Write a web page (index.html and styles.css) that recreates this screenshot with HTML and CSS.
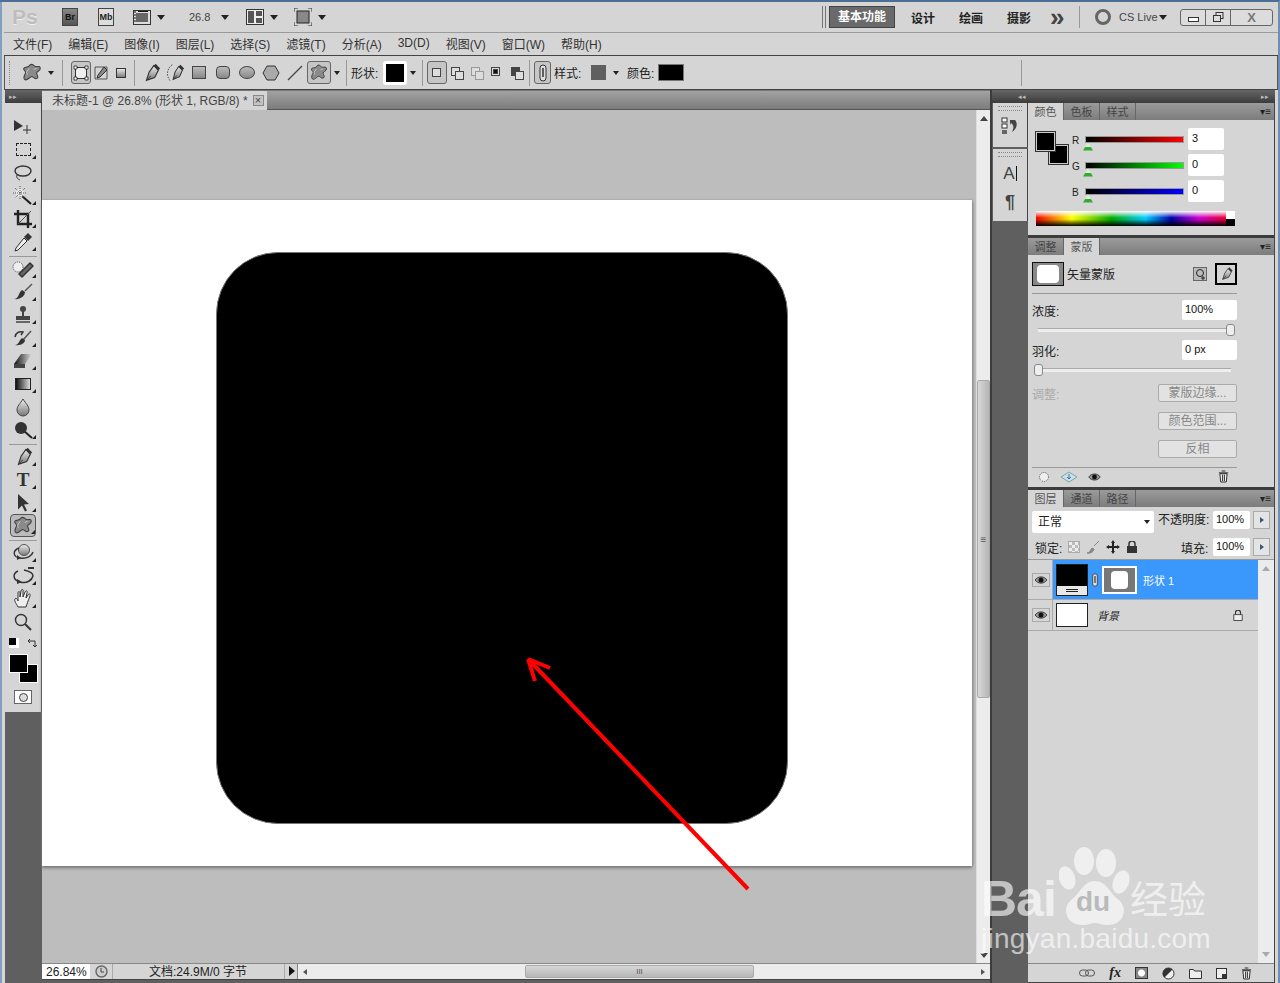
FILE: index.html
```html
<!DOCTYPE html>
<html lang="zh-CN">

<head>
    <meta charset="UTF-8">
    <title>Photoshop CS5</title>
    <link rel="stylesheet" href="styles.css">
</head>

<body>
    <!-- shared icons -->
    <svg class="defs" width="0" height="0">
        <defs>
            <linearGradient id="gr" x1="0" x2="1"><stop offset="0" stop-color="#111"/><stop offset="1" stop-color="#ddd"/></linearGradient>
            <linearGradient id="gv" x1="0" x2="0" y1="0" y2="1"><stop offset="0" stop-color="#eee"/><stop offset="1" stop-color="#777"/></linearGradient>
            <symbol id="blob" viewBox="0 0 24 24"><path d="M10 3c3-2 4 2 6 2s5-1 5 2-4 3-4 5 3 5 0 6-4-3-6-2-5 5-7 3 0-5 1-7-3-3-2-5 5 0 7-4z" fill="#8a8a8a" stroke="#444" stroke-width="1.2"/><path d="M9 7l-3 4 1 3M14 8l3-1" stroke="#ccc" fill="none"/></symbol>
            <symbol id="pen" viewBox="0 0 24 24"><path d="M15 4l5 5-4 8-9 3 3-9z" fill="url(#gv)" stroke="#333" stroke-width="1.2"/><path d="M7 20l5-5" stroke="#333"/><path d="M15 4l2-2 5 5-2 2z" fill="#333"/></symbol>
            <symbol id="pen2" viewBox="0 0 24 24"><path d="M16 5l4 4-3 7-7 3 2-8z" fill="url(#gv)" stroke="#333" stroke-width="1.1"/><path d="M10 19l4-4" stroke="#333"/><path d="M16 5l2-2 4 4-2 2z" fill="#333"/><path d="M9 3C3 7 2 15 7 21" fill="none" stroke="#333" stroke-dasharray="1.500 1.500"/></symbol>
            <symbol id="eye" viewBox="0 0 16 12"><path d="M1 6c3-5 11-5 14 0-3 5-11 5-14 0z" fill="#999" stroke="#222"/><circle cx="8" cy="6" r="3" fill="#111"/></symbol>
            <symbol id="trash" viewBox="0 0 12 14"><path d="M2 4h8l-1 9H3z" fill="#eee" stroke="#222"/><path d="M1 3h10M4 1h4M5 5v7M7 5v7" stroke="#222"/></symbol>
            <symbol id="clip" viewBox="0 0 10 18"><rect x="2" y="1" width="6" height="16" rx="3" fill="#ddd" stroke="#333"/><path d="M5 4v9" stroke="#333" stroke-width="1.5"/></symbol>
        </defs>
    </svg>

    <div class="app">
        <div class="appbar">
            <span class="ps-logo">Ps</span>
            <span class="bridge dark">Br</span>
            <span class="bridge">Mb</span>
            <svg class="bar-icon film" width="18" height="18" viewBox="0 0 18 18"><rect x=".5" y="2.5" width="17" height="14" fill="#ddd" stroke="#333"/><rect x="3" y="5" width="12" height="9" fill="#666"/><path d="M1 4h2M1 7h2M1 10h2M1 13h2M5 3.5h10" stroke="#111"/></svg>
            <i class="caret"></i>
            <span class="zoom-val">26.8</span>
            <i class="caret"></i>
            <svg class="bar-icon arrange" width="18" height="16" viewBox="0 0 18 16"><rect x=".5" y=".5" width="17" height="15" fill="#eee" stroke="#333"/><rect x="2" y="2" width="6" height="12" fill="#555"/><rect x="10" y="2" width="6" height="5" fill="#555"/><rect x="10" y="9" width="6" height="5" fill="#555"/></svg>
            <i class="caret"></i>
            <svg class="bar-icon screen" width="18" height="18" viewBox="0 0 18 18"><rect x="3" y="3" width="12" height="12" fill="#888" stroke="#222"/><path d="M0 4V0h4M14 0h4v4M18 14v4h-4M4 18H0v-4" fill="none" stroke="#333"/></svg>
            <i class="caret"></i>
            <span class="spacer"></span>
            <span class="grip-lines"></span>
            <span class="ws-btn">基本功能</span>
            <span class="ws-item">设计</span>
            <span class="ws-item">绘画</span>
            <span class="ws-item">摄影</span>
            <span class="ws-more">»</span>
            <span class="bar-sep"></span>
            <span class="cs-ring"></span>
            <span class="cs-live">CS Live</span>
            <i class="caret small"></i>
            <div class="win-btns">
                <span class="win-btn"><i class="min"></i></span>
                <span class="win-btn"><svg width="12" height="12" viewBox="0 0 12 12"><rect x="4" y="1.5" width="7" height="6" fill="#ddd" stroke="#333"/><rect x="1.5" y="4.5" width="7" height="6" fill="#ddd" stroke="#333"/></svg></span>
                <span class="win-btn close">X</span>
            </div>
        </div>

        <div class="menubar">
            <span>文件(F)</span><span>编辑(E)</span><span>图像(I)</span><span>图层(L)</span><span>选择(S)</span><span>滤镜(T)</span><span>分析(A)</span><span>3D(D)</span><span>视图(V)</span><span>窗口(W)</span><span>帮助(H)</span>
        </div>

        <div class="options">
            <span class="opt-grip"></span>
            <svg class="opt" width="22" height="22"><use href="#blob"/></svg>
            <i class="caret tiny"></i>
            <span class="opt-sep first"></span>
            <span class="opt narrow boxed"><svg width="16" height="16" viewBox="0 0 16 16"><rect x="2.5" y="2.5" width="11" height="11" fill="#eee" stroke="#333"/><path d="M1 1h3v3H1zM12 1h3v3h-3zM1 12h3v3H1zM12 12h3v3h-3z" fill="#fff" stroke="#222" stroke-width=".8"/></svg></span>
            <span class="opt narrow"><svg width="18" height="18" viewBox="0 0 18 18"><path d="M3 3h12v12H3z" fill="none" stroke="#555"/><path d="M12 3l3 3-7 7-3 1 1-3z" fill="#888" stroke="#333"/></svg></span>
            <span class="opt narrow"><svg width="14" height="14" viewBox="0 0 14 14"><rect x="2.500" y="2.500" width="9" height="9" fill="url(#gv)" stroke="#333"/></svg></span>
            <span class="opt-sep pens"></span>
            <svg class="opt" width="24" height="22"><use href="#pen"/></svg>
            <svg class="opt" width="24" height="22"><use href="#pen2"/></svg>
            <span class="opt"><i class="shape rect"></i></span>
            <span class="opt"><i class="shape round"></i></span>
            <span class="opt"><i class="shape oval"></i></span>
            <span class="opt"><svg width="18" height="16" viewBox="0 0 18 16"><path d="M5 1h8l4 7-4 7H5L1 8z" fill="#aaa" stroke="#333"/></svg></span>
            <span class="opt"><svg width="18" height="18" viewBox="0 0 18 18"><path d="M2 16L16 2" stroke="#444" stroke-width="1.3"/></svg></span>
            <span class="opt boxed wide"><svg width="20" height="20"><use href="#blob"/></svg></span>
            <i class="caret tiny near"></i>
            <span class="opt-sep label"></span>
            <span class="opt-label">形状:</span>
            <span class="shape-swatch"></span>
            <i class="caret tiny near"></i>
            <span class="opt-sep modes"></span>
            <span class="opt boxed mode"><i class="mode-a"></i></span>
            <span class="opt mode"><i class="mode-a"></i><i class="mode-b"></i></span>
            <span class="opt mode"><i class="mode-a pale"></i><i class="mode-b pale"></i></span>
            <span class="opt mode"><i class="mode-a"></i><i class="mode-b black"></i></span>
            <span class="opt mode"><i class="mode-a dark"></i><i class="mode-b"></i></span>
            <span class="opt-sep tight"></span>
            <span class="opt boxed link"><svg width="10" height="18"><use href="#clip"/></svg></span>
            <span class="opt-label">样式:</span>
            <span class="style-swatch"></span>
            <i class="caret tiny far"></i>
            <span class="opt-label color-label">颜色:</span>
            <span class="color-swatch"></span>
            <span class="spacer"></span>
            <span class="opt-sep end"></span>
        </div>

        <div class="workspace">
            <div class="tools">
                <div class="dock-head"><span>▸▸</span></div>
                <div class="tools-body">
                    <span class="tool"><svg width="22" height="20" viewBox="0 0 22 20"><path d="M2 3l9 6-9 5z" fill="#333"/><path d="M15 8v9M11 13h8" stroke="#333"/></svg></span>
                    <span class="tool more"><i class="marquee"></i></span>
                    <span class="tool more"><svg width="20" height="20" viewBox="0 0 20 20"><ellipse cx="10" cy="8" rx="8" ry="5" fill="none" stroke="#333" stroke-width="1.4"/><path d="M4 12c-1 3 1 4 3 5" fill="none" stroke="#333"/></svg></span>
                    <span class="tool more"><svg width="20" height="20" viewBox="0 0 20 20"><path d="M8 9l10 9" stroke="#222" stroke-width="2.2"/><circle cx="7" cy="7" r="4" fill="#eee"/><path d="M7 0v14M0 7h14M2 2l10 10M12 2L2 12" stroke="#555" stroke-dasharray="1 1"/></svg></span>
                    <span class="tool more"><svg width="20" height="20" viewBox="0 0 20 20"><path d="M5 1v14h14M1 5h14v14" fill="none" stroke="#222" stroke-width="2.4"/><path d="M5 15L18 2" stroke="#555"/></svg></span>
                    <span class="tool more"><svg width="20" height="20" viewBox="0 0 20 20"><path d="M11 6l3 3-9 9-3 1 1-3z" fill="#eee" stroke="#333"/><path d="M11 5l4-4 4 4-4 4z" fill="#333"/></svg></span>
                    <span class="tool-sep"></span>
                    <span class="tool more"><svg width="22" height="20" viewBox="0 0 22 20"><circle cx="6" cy="8" r="5" fill="#eee" stroke="#444" stroke-dasharray="1 1"/><path d="M7 15L18 4l3 3-11 11z" fill="#666" stroke="#333" stroke-width="1.5" stroke-linejoin="round"/></svg></span>
                    <span class="tool more"><svg width="20" height="20" viewBox="0 0 20 20"><path d="M12 9l7-7" stroke="#555" stroke-width="1.5"/><path d="M1 17c5 0 4-6 8-9l3 2c0 4-5 8-11 7z" fill="#333"/></svg></span>
                    <span class="tool more"><svg width="20" height="20" viewBox="0 0 20 20"><circle cx="10" cy="4" r="3" fill="#444"/><path d="M9 6h2v5H9z" fill="#444"/><path d="M3 11h14v4H3z" fill="#444"/><path d="M3 17h14" stroke="#666" stroke-width="2"/></svg></span>
                    <span class="tool more"><svg width="20" height="20" viewBox="0 0 20 20"><path d="M10 12l8-9" stroke="#555" stroke-width="1.5"/><path d="M2 17c4 0 4-5 7-7l3 2c0 3-4 6-10 5z" fill="#333"/><path d="M2 9c1-5 5-6 8-5l-2 3" fill="none" stroke="#333" stroke-width="1.5"/></svg></span>
                    <span class="tool more"><svg width="20" height="20" viewBox="0 0 20 20"><path d="M8 3h11l-7 10H1z" fill="url(#gr)"/><path d="M1 13h11v4H1z" fill="#444"/></svg></span>
                    <span class="tool more"><i class="grad-box"></i></span>
                    <span class="tool"><svg width="18" height="20" viewBox="0 0 18 20"><path d="M9 2c3 5 6 7 6 11a6 6 0 01-12 0c0-4 3-6 6-11z" fill="url(#gv)" stroke="#444"/></svg></span>
                    <span class="tool more"><svg width="20" height="20" viewBox="0 0 20 20"><path d="M11 11l8 7" stroke="#222" stroke-width="2"/><circle cx="8" cy="8" r="6" fill="#333"/></svg></span>
                    <span class="tool-sep"></span>
                    <span class="tool more"><svg width="22" height="22"><use href="#pen"/></svg></span>
                    <span class="tool more type">T</span>
                    <span class="tool more"><svg width="18" height="20" viewBox="0 0 18 20"><path d="M4 1l11 10-5 .5 3 6-2 1-3-6-4 4z" fill="#333"/></svg></span>
                    <span class="tool more active"><svg width="22" height="22"><use href="#blob"/></svg></span>
                    <span class="tool-sep"></span>
                    <span class="tool more"><svg width="22" height="20" viewBox="0 0 22 20"><circle cx="12" cy="7" r="5.5" fill="url(#gv)" stroke="#555"/><path d="M7 5C0 8 1 14 8 15s12-2 13-6" fill="none" stroke="#333" stroke-width="1.4"/><path d="M5 12l4 3-4 2z" fill="#333"/></svg></span>
                    <span class="tool more"><svg width="22" height="20" viewBox="0 0 22 20"><path d="M6 5C0 8 1 14 8 16s12-2 13-6c0-3-4-5-9-6" fill="none" stroke="#333" stroke-width="1.5"/><path d="M5 13l5 3-5 2z" fill="#333"/><path d="M16 2h6" stroke="#333" stroke-width="2"/></svg></span>
                    <span class="tool more"><svg width="20" height="20" viewBox="0 0 20 20"><path d="M5 18C3 14 1 12 2 10s3 1 3 2l0-8c0-2 2-2 2 0V8l1-6c0-2 3-2 2 0V8l2-5c1-2 3-1 2 1l-1 5 2-3c1-2 3-1 2 1-2 5-3 8-4 11z" fill="#eee" stroke="#333"/></svg></span>
                    <span class="tool"><svg width="20" height="20" viewBox="0 0 20 20"><circle cx="8" cy="8" r="5.5" fill="none" stroke="#333" stroke-width="1.4"/><path d="M12 12l6 6" stroke="#333" stroke-width="2"/></svg></span>
                    <div class="mini-swatches">
                        <span class="mini-def"><i></i></span>
                        <svg width="11" height="11" viewBox="0 0 11 11"><path d="M2 3h7v6M4 1L2 3l2 2M7 7l2 2 2-2" fill="none" stroke="#333"/></svg>
                    </div>
                    <div class="fg-bg">
                        <span class="fg"></span>
                        <span class="bg"></span>
                    </div>
                    <span class="quick-mask"><i></i></span>
                </div>
            </div>

            <div class="doc-area">
                <div class="doc-tabs">
                    <div class="doc-tab">未标题-1 @ 26.8% (形状 1, RGB/8) *<span class="tab-close">×</span></div>
                </div>
                <div class="doc-main">
                    <div class="canvas">
                        <div class="doc-page">
                            <div class="rounded-shape"></div>
                        </div>
                    </div>
                    <div class="vscroll">
                        <i class="arr up"></i>
                        <span class="vtrack-top"></span>
                        <span class="vthumb">≡</span>
                        <span class="spacer"></span>
                        <i class="arr down"></i>
                    </div>
                </div>
                <div class="status">
                    <span class="st-zoom">26.84%</span>
                    <span class="st-icon"><svg width="13" height="13" viewBox="0 0 13 13"><circle cx="6.5" cy="6.5" r="5.5" fill="#ccc" stroke="#666" stroke-width="1.4"/><path d="M6 3v4h3" fill="none" stroke="#444"/></svg></span>
                    <span class="st-text">文档:24.9M/0 字节</span>
                    <span class="st-arrow"></span>
                    <div class="hscroll">
                        <i class="harr left"></i>
                        <span class="hthumb">III</span>
                        <span class="spacer"></span>
                        <i class="harr right"></i>
                    </div>
                </div>
            </div>

            <div class="dock">
                <div class="dock-head mid"><span>◂◂</span></div>
                <div class="dock-group one">
                    <i class="dots"></i>
                    <svg width="18" height="18" viewBox="0 0 18 18"><rect x="1" y="1" width="5" height="4" fill="#fff" stroke="#333"/><rect x="1" y="7" width="5" height="4" fill="#fff" stroke="#333"/><rect x="1" y="13" width="5" height="4" fill="#666"/><path d="M9 3h5c3 3 2 9-3 12 2-4 2-7-1-9l-1 2z" fill="#444"/></svg>
                </div>
                <div class="dock-group two">
                    <i class="dots"></i>
                    <span class="dock-a">A<b></b></span>
                    <span class="dock-p">¶</span>
                </div>
            </div>

            <div class="panels">
                <div class="dock-head right"><span>▸▸</span></div>

                <section class="panel color-panel">
                    <div class="tabs"><span class="tab on">颜色</span><span class="tab">色板</span><span class="tab">样式</span><span class="menu-ic">▾≡</span></div>
                    <div class="color-body">
                        <div class="color-swatches"><span class="c-fg"></span><span class="c-bg"></span></div>
                        <div class="color-rows">
                            <div class="c-row"><span class="c-label">R</span><span class="c-track red"><i class="tri"></i></span><span class="field c-field">3</span></div>
                            <div class="c-row"><span class="c-label">G</span><span class="c-track green"><i class="tri"></i></span><span class="field c-field">0</span></div>
                            <div class="c-row"><span class="c-label">B</span><span class="c-track blue"><i class="tri"></i></span><span class="field c-field">0</span></div>
                        </div>
                    </div>
                    <div class="spectrum"><span class="spec-end"></span></div>
                </section>

                <section class="panel mask-panel">
                    <div class="tabs"><span class="tab">调整</span><span class="tab on">蒙版</span><span class="menu-ic">▾≡</span></div>
                    <div class="mask-body">
                        <div class="mask-head">
                            <span class="mask-thumb"><i></i></span>
                            <span class="mask-name">矢量蒙版</span>
                            <span class="spacer"></span>
                            <span class="mask-add"><svg width="12" height="12" viewBox="0 0 12 12"><circle cx="6" cy="5" r="3.5" fill="none" stroke="#222"/><path d="M9 8v4M7 10h4" stroke="#222"/></svg></span>
                            <span class="mask-vec"><svg width="16" height="16"><use href="#pen"/></svg></span>
                        </div>
                        <div class="mask-row first"><span>浓度:</span><span class="field m-field">100%</span></div>
                        <div class="m-slider"><i class="knob end"></i></div>
                        <div class="mask-row"><span>羽化:</span><span class="field m-field">0 px</span></div>
                        <div class="m-slider"><i class="knob"></i></div>
                        <div class="mask-row btn-row"><span class="off">调整:</span><span class="m-btn">蒙版边缘...</span></div>
                        <div class="mask-row btn-row gap"><span class="m-btn">颜色范围...</span></div>
                        <div class="mask-row btn-row gap"><span class="m-btn">反相</span></div>
                        <div class="mask-foot">
                            <svg width="12" height="12" viewBox="0 0 12 12"><circle cx="6" cy="6" r="4.5" fill="#eee" stroke="#555" stroke-dasharray="1 1"/></svg>
                            <svg width="18" height="12" viewBox="0 0 18 12"><path d="M9 1l8 5-8 5-8-5z" fill="#cde" stroke="#7a9"/><path d="M9 3v5M7 6l2 2 2-2" fill="none" stroke="#379"/></svg>
                            <svg width="13" height="10"><use href="#eye"/></svg>
                            <span class="spacer"></span>
                            <svg width="11" height="13"><use href="#trash"/></svg>
                        </div>
                    </div>
                </section>

                <section class="panel layer-panel">
                    <div class="tabs"><span class="tab on">图层</span><span class="tab">通道</span><span class="tab">路径</span><span class="menu-ic">▾≡</span></div>
                    <div class="blend-row">
                        <span class="blend-select">正常<i class="caret tiny"></i></span>
                        <span class="blend-label">不透明度:</span>
                        <span class="field pct">100%</span><span class="step"></span>
                    </div>
                    <div class="lock-row">
                        <span>锁定:</span>
                        <i class="lock-ic checker"></i>
                        <svg width="14" height="14" viewBox="0 0 14 14"><path d="M8 6l5-5M1 13c3 0 3-3 5-5l2 1c0 2-3 5-7 4z" fill="#888" stroke="#888"/></svg>
                        <svg width="14" height="14" viewBox="0 0 14 14"><path d="M7 0l2 3H8v3h3V5l3 2-3 2V8H8v3h1l-2 3-2-3h1V8H3v1L0 7l3-2v1h3V3H5z" fill="#222"/></svg>
                        <svg width="12" height="12" viewBox="0 0 12 12"><rect x="1" y="5" width="10" height="7" fill="#333"/><path d="M3 5V3a3 3 0 016 0v2" fill="none" stroke="#333" stroke-width="1.5"/></svg>
                        <span class="spacer"></span>
                        <span class="fill-label">填充:</span>
                        <span class="field pct">100%</span><span class="step"></span>
                    </div>
                    <div class="layer-list">
                        <div class="layers">
                            <div class="layer selected">
                                <span class="eye"><svg width="14" height="10"><use href="#eye"/></svg></span>
                                <span class="thumb shape-thumb"><i></i></span>
                                <svg class="chain" width="8" height="14"><use href="#clip"/></svg>
                                <span class="thumb mask-mini"><i></i></span>
                                <span class="layer-name">形状 1</span>
                            </div>
                            <div class="layer bg-layer">
                                <span class="eye"><svg width="14" height="10"><use href="#eye"/></svg></span>
                                <span class="thumb white"></span>
                                <span class="layer-name it">背景</span>
                                <span class="spacer"></span>
                                <svg class="bg-lock" width="10" height="11" viewBox="0 0 12 13"><rect x="1" y="5.5" width="10" height="7" fill="#eee" stroke="#333"/><path d="M3 5V3a3 3 0 016 0v2" fill="none" stroke="#333" stroke-width="1.4"/></svg>
                            </div>
                        </div>
                        <div class="layer-scroll"><i class="arr up pale"></i><span class="spacer"></span><i class="arr down pale"></i></div>
                    </div>
                    <div class="layer-foot">
                        <svg width="16" height="8" viewBox="0 0 16 8"><rect x=".5" y="1" width="9" height="6" rx="3" fill="none" stroke="#555"/><rect x="6.5" y="1" width="9" height="6" rx="3" fill="none" stroke="#555"/></svg>
                        <span class="fx">fx</span>
                        <i class="foot-mask"></i>
                        <svg width="13" height="13" viewBox="0 0 13 13"><circle cx="6.5" cy="6.5" r="5.5" fill="#eee" stroke="#333"/><path d="M6.5 1a5.500 5.500 0 00-4 9.500l8-8A5.500 5.500 0 006.500 1z" fill="#333"/></svg>
                        <svg width="13" height="11" viewBox="0 0 13 11"><path d="M.5 10.500V1.500h4l1 1.500h7v7.500z" fill="#eee" stroke="#333"/></svg>
                        <svg width="11" height="11" viewBox="0 0 11 11"><rect x=".5" y=".5" width="10" height="10" fill="#eee" stroke="#333"/><path d="M6 6h5v5H6z" fill="#333"/></svg>
                        <svg width="11" height="13"><use href="#trash"/></svg>
                    </div>
                </section>
            </div>
        </div>
    </div>

    <!-- annotation drawn over the screenshot -->
    <svg class="arrow" width="1280" height="983" viewBox="0 0 1280 983">
        <path d="M748 889L529 660M528 659l22 9M528 659l7 22" fill="none" stroke="#f00" stroke-width="4"/>
    </svg>

    <!-- watermark -->
    <div class="watermark">
        <span class="wm-bai">Bai</span>
        <svg class="wm-paw" width="72" height="86" viewBox="0 0 72 86">
            <ellipse cx="25" cy="15" rx="10" ry="14" fill="#fff"/>
            <ellipse cx="47" cy="17" rx="10" ry="14" fill="#fff"/>
            <ellipse cx="8" cy="32" rx="8" ry="12" fill="#fff" transform="rotate(-20 8 32)"/>
            <ellipse cx="62" cy="36" rx="8" ry="12" fill="#fff" transform="rotate(20 62 36)"/>
            <path d="M36 35c12 0 14 12 24 19 10 9 4 26-12 25-6 0-8-2-12-2s-6 2-12 2C8 80 2 63 12 54c10-7 12-19 24-19z" fill="#fff"/>
        </svg>
        <span class="wm-du">du</span>
        <span class="wm-jy">经验</span>
        <span class="wm-url">jingyan.baidu.com</span>
    </div>
</body>

</html>
```

FILE: styles.css
```css
* {
    margin: 0;
    padding: 0;
    box-sizing: border-box;
}

body {
    width: 1280px;
    height: 983px;
    overflow: hidden;
    position: relative;
    background: #d5d5d5;
    font-family: "Liberation Sans", "Noto Sans CJK SC", sans-serif;
    font-size: 12px;
    color: #222;
}

i {
    display: block;
    font-style: normal;
}

.defs {
    position: absolute;
}

.spacer {
    flex: 1;
}

.app {
    width: 1280px;
    height: 983px;
    border-top: 2px solid #4c6d94;
    border-right: 2px solid #6f8fb0;
    display: flex;
    flex-direction: column;
    box-shadow: inset 2px 0 0 #7fa0c0;
}

/* top application bar */
.appbar {
    height: 31px;
    flex: none;
    border-bottom: 1px solid #9a9a9a;
    margin-left: 4px;
    display: flex;
    align-items: center;
    padding-right: 5px;
}

.ps-logo {
    margin-left: 8px;
    width: 24px;
    font-size: 21px;
    font-weight: bold;
    color: #bdbdbd;
    text-shadow: 0 1px 0 #eee;
}

.bridge {
    width: 16px;
    height: 18px;
    margin-left: 26px;
    border: 1px solid #444;
    background: #ddd;
    font-size: 9px;
    font-weight: bold;
    line-height: 16px;
    text-align: center;
}

.bridge + .bridge {
    margin-left: 20px;
}

.bridge.dark {
    background: linear-gradient(#888, #555);
    color: #111;
}

.bar-icon.film {
    margin-left: 19px;
}

.bar-icon.arrange {
    margin-left: 17px;
}

.bar-icon.screen {
    margin-left: 16px;
}

.caret {
    width: 0;
    height: 0;
    margin-left: 6px;
    border: 4px solid transparent;
    border-top: 5px solid #222;
    border-bottom: 0;
}

.caret.small {
    margin-left: 2px;
}

.caret.tiny {
    margin-left: 4px;
    border-width: 3px;
    border-top-width: 4px;
    border-bottom-width: 0;
}

.caret.tiny.near {
    margin-left: 3px;
}

.caret.tiny.far {
    margin-left: 7px;
}

.zoom-val {
    margin-left: 24px;
    width: 22px;
    font-size: 11px;
    color: #444;
}

.zoom-val + .caret {
    margin-left: 10px;
}

.grip-lines {
    width: 4px;
    height: 22px;
    border-left: 1px solid #777;
    border-right: 1px solid #777;
}

.ws-btn {
    width: 66px;
    height: 22px;
    margin-left: 3px;
    border: 1px solid #444;
    background: #6a6a6a;
    color: #fff;
    font-weight: bold;
    line-height: 20px;
    text-align: center;
}

.ws-item {
    width: 24px;
    margin-left: 24px;
    font-weight: bold;
    color: #222;
    white-space: nowrap;
}

.ws-btn + .ws-item {
    margin-left: 16px;
}

.ws-more {
    width: 16px;
    margin-left: 19px;
    font-size: 26px;
    font-weight: bold;
    line-height: 22px;
    color: #444;
}

.bar-sep {
    width: 1px;
    height: 22px;
    margin-left: 13px;
    background: #999;
}

.cs-ring {
    width: 16px;
    height: 16px;
    margin-left: 15px;
    border: 3px solid #666;
    border-radius: 50%;
}

.cs-live {
    margin-left: 8px;
    width: 38px;
    font-size: 11px;
    color: #444;
    white-space: nowrap;
}

.win-btns {
    display: flex;
    width: 93px;
    height: 17px;
    margin-left: 13px;
    border: 1px solid #666;
    border-radius: 3px;
    background: #dcdcdc;
}

.win-btn {
    width: 25px;
    border-right: 1px solid #666;
    display: flex;
    align-items: center;
    justify-content: center;
}

.win-btn .min {
    width: 11px;
    height: 5px;
    margin-top: 5px;
    border: 1px solid #333;
    background: #fff;
}

.win-btn.close {
    flex: 1;
    border: 0;
    font-weight: bold;
    font-size: 13px;
    color: #777;
}

/* menu */
.menubar {
    height: 23px;
    flex: none;
    margin-left: 4px;
    padding: 0 0 2px 9px;
    border-bottom: 1px solid #444;
    display: flex;
    align-items: center;
    gap: 16px;
    color: #333;
    white-space: nowrap;
}

/* options bar */
.options {
    height: 34px;
    flex: none;
    margin-left: 4px;
    border-left: 1px solid #555;
    border-right: 1px solid #555;
    border-bottom: 1px solid #444;
    display: flex;
    align-items: center;
    white-space: nowrap;
}

.opt-grip {
    width: 3px;
    height: 24px;
    margin-left: 4px;
    border-left: 1px dotted #888;
}

.opt {
    width: 24px;
    height: 24px;
    flex: none;
    display: flex;
    align-items: center;
    justify-content: center;
    position: relative;
}

.opt.narrow {
    width: 20px;
}

svg.opt {
    padding: 1px;
}

.options > svg.opt:first-of-type {
    margin-left: 8px;
}

.opt.boxed {
    height: 23px;
    border: 1px solid #666;
    border-radius: 3px;
    background: #c6c6c6;
}

.opt-sep {
    width: 1px;
    height: 26px;
    flex: none;
    background: #999;
}

.opt-sep.first {
    margin: 0 8px 0 8px;
}

.opt-sep.pens {
    margin: 0 4px 0 3px;
}

.opt-sep.label {
    margin: 0 4px 0 6px;
}

.opt-sep.modes {
    margin: 0 4px 0 6px;
}

.opt-sep.tight {
    margin: 0 4px 0 2px;
}

.opt-sep.end {
    margin-right: 255px;
}

.shape {
    width: 14px;
    height: 13px;
    background: linear-gradient(#bbb, #888);
    border: 1px solid #444;
}

.shape.round {
    border-radius: 4px;
}

.shape.oval {
    width: 16px;
    border-radius: 50%;
}

.opt-label {
    width: 28px;
    flex: none;
    color: #222;
}

.shape-swatch {
    width: 24px;
    height: 24px;
    margin-left: 4px;
    border: 3px solid #fff;
    border-radius: 3px;
    background: #000;
}

.opt.mode {
    width: 20px;
}

.mode-a,
.mode-b {
    position: absolute;
    width: 9px;
    height: 9px;
    left: 4px;
    top: 6px;
    border: 1px solid #444;
    background: #ddd;
}

.mode-b {
    left: 8px;
    top: 10px;
}

.mode-a.pale,
.mode-b.pale {
    border-color: #999;
    background: #ddd;
}

.mode-b.black {
    background: #111;
    width: 5px;
    height: 5px;
    left: 6px;
    top: 8px;
}

.mode-a.dark {
    background: #444;
}

.opt.link {
    width: 17px;
    margin-right: 3px;
}

.style-swatch {
    width: 15px;
    height: 15px;
    margin-left: 9px;
    background: #5f5f5f;
}

.color-label {
    margin-left: 8px;
}

.color-swatch {
    width: 26px;
    height: 17px;
    margin-left: 3px;
    border: 1px solid #777;
    background: #000;
}

/* work area */
.workspace {
    flex: 1;
    height: 890px;
    margin-left: 5px;
    margin-right: 3px;
    display: flex;
    background: #5f5f5f;
    border-bottom: 0;
}

.dock-head {
    height: 13px;
    flex: none;
    background: linear-gradient(#666, #3c3c3c);
    color: #bbb;
    font-size: 7px;
    line-height: 13px;
    padding-left: 4px;
}

.dock-head.mid {
    text-align: right;
    padding: 0 2px 0 0;
}

.dock-head.right {
    text-align: right;
    padding-right: 6px;
}

/* tools */
.tools {
    width: 37px;
    flex: none;
    display: flex;
    flex-direction: column;
}

.tools-body {
    height: 609px;
    padding-top: 12px;
    background: #d5d5d5;
    border-right: 1px solid #444;
    display: flex;
    flex-direction: column;
    align-items: center;
}

.tool {
    width: 26px;
    height: 23px;
    flex: none;
    display: flex;
    align-items: center;
    justify-content: center;
    position: relative;
}

.tool.more::after {
    content: "";
    position: absolute;
    right: 0;
    bottom: 2px;
    border: 2px solid transparent;
    border-right-color: #222;
    border-bottom-color: #222;
}

.tool.active {
    border: 1px solid #555;
    border-radius: 4px;
    background: #bbb;
}

.tool.type {
    font-family: "Liberation Serif", serif;
    font-size: 19px;
    font-weight: bold;
    color: #333;
}

.tool-sep {
    width: 28px;
    height: 4px;
    margin-bottom: 0;
    flex: none;
    border-bottom: 1px solid #999;
    margin-top: 0;
}

.marquee {
    width: 15px;
    height: 13px;
    border: 1px dashed #222;
}

.grad-box {
    width: 16px;
    height: 12px;
    border: 1px solid #222;
    background: linear-gradient(to right, #111, #ddd);
}

.mini-swatches {
    width: 28px;
    height: 14px;
    margin-top: 5px;
    display: flex;
    justify-content: space-between;
}

.mini-def {
    width: 10px;
    height: 10px;
    background: #fff;
    position: relative;
}

.mini-def i {
    width: 7px;
    height: 7px;
    background: #000;
}

.fg-bg {
    width: 28px;
    height: 28px;
    margin-top: 2px;
    position: relative;
}

.fg-bg .fg,
.fg-bg .bg {
    position: absolute;
    width: 19px;
    height: 19px;
    border: 1px solid #fff;
    background: #000;
}

.fg-bg .fg {
    left: 0;
    top: 0;
    z-index: 1;
}

.fg-bg .bg {
    left: 10px;
    top: 10px;
}

.quick-mask {
    width: 18px;
    height: 14px;
    margin-top: 8px;
    border: 1px solid #666;
    background: #fff;
    display: flex;
    align-items: center;
    justify-content: center;
}

.quick-mask i {
    width: 9px;
    height: 9px;
    border: 1px solid #444;
    border-radius: 50%;
    background: #ddd;
}

/* document */
.doc-area {
    width: 950px;
    flex: none;
    display: flex;
    flex-direction: column;
    border-right: 2px solid #3c3c3c;
}

.doc-tabs {
    height: 20px;
    flex: none;
    background: linear-gradient(#a2a2a2, #7c7c7c);
    border-bottom: 1px solid #555;
    border-top: 1px solid #777;
}

.doc-tab {
    width: 225px;
    height: 19px;
    padding-left: 10px;
    background: #d5d5d5;
    color: #444;
    line-height: 18px;
    white-space: nowrap;
    display: flex;
    align-items: center;
}

.tab-close {
    width: 11px;
    height: 11px;
    margin-left: 5px;
    border: 1px solid #888;
    background: #c4c4c4;
    font-size: 11px;
    line-height: 9px;
    text-align: center;
}

.doc-main {
    height: 854px;
    flex: none;
    display: flex;
}

.canvas {
    width: 934px;
    flex: none;
    padding-top: 90px;
    background: #bdbdbd;
}

.doc-page {
    width: 930px;
    height: 666px;
    padding: 52px 0 0 174px;
    background: #fff;
    box-shadow: 0 2px 3px #777, 1px 0 2px #999;
}

.rounded-shape {
    width: 572px;
    height: 572px;
    border: 1px solid #777;
    border-radius: 62px;
    background: #000;
}

.vscroll {
    flex: 1;
    background: #ececec;
    border-left: 1px solid #ddd;
    display: flex;
    flex-direction: column;
    align-items: center;
    padding: 6px 0;
}

.arr {
    width: 0;
    height: 0;
    flex: none;
    border: 4px solid transparent;
}

.arr.up {
    border-top: 0;
    border-bottom: 5px solid #444;
}

.arr.down {
    border-bottom: 0;
    border-top: 5px solid #444;
}

.arr.pale.up {
    border-bottom-color: #aaa;
}

.arr.pale.down {
    border-top-color: #aaa;
}

.vtrack-top {
    height: 259px;
    flex: none;
}

.vthumb {
    width: 100%;
    height: 318px;
    flex: none;
    background: linear-gradient(to right, #d8d8d8, #b5b5b5);
    border: 1px solid #aaa;
    border-radius: 2px;
    display: flex;
    align-items: center;
    justify-content: center;
    font-size: 10px;
    color: #555;
}

/* status bar */
.status {
    height: 17px;
    flex: none;
    display: flex;
    background: #d5d5d5;
    border-top: 1px solid #888;
    border-bottom: 1px solid #444;
    margin-top: -1px;
    white-space: nowrap;
}

.st-zoom {
    width: 48px;
    background: #fff;
    padding-left: 4px;
    line-height: 16px;
}

.st-icon {
    width: 22px;
    display: flex;
    align-items: center;
    justify-content: center;
}

.st-text {
    width: 172px;
    padding-left: 36px;
    border-left: 1px solid #aaa;
    line-height: 16px;
}

.st-arrow {
    width: 14px;
    position: relative;
    border-left: 1px solid #aaa;
    border-right: 1px solid #888;
}

.st-arrow::after {
    content: "";
    position: absolute;
    left: 4px;
    top: 2px;
    border: 5px solid transparent;
    border-left: 6px solid #111;
    border-right: 0;
}

.hscroll {
    flex: 1;
    background: #ececec;
    display: flex;
    align-items: center;
    padding: 0 5px;
}

.harr {
    width: 0;
    height: 0;
    border: 3px solid transparent;
}

.harr.left {
    border-left: 0;
    border-right: 4px solid #555;
}

.harr.right {
    border-right: 0;
    border-left: 4px solid #555;
}

.hthumb {
    width: 229px;
    height: 13px;
    margin-left: 218px;
    border: 1px solid #aaa;
    border-radius: 2px;
    background: linear-gradient(#d8d8d8, #b5b5b5);
    font-size: 8px;
    line-height: 11px;
    text-align: center;
    color: #555;
}

/* collapsed dock */
.dock {
    width: 36px;
    flex: none;
    display: flex;
    flex-direction: column;
}

.dock-group {
    background: #d5d5d5;
    border-right: 1px solid #444;
    margin-left: 1px;
    display: flex;
    flex-direction: column;
    align-items: center;
}

.dock-group.one {
    height: 44px;
    gap: 6px;
}

.dock-group.two {
    height: 72px;
    margin-top: 2px;
}

.dots {
    width: 24px;
    height: 5px;
    margin-top: 3px;
    border-top: 1px dotted #888;
    border-bottom: 1px dotted #888;
}

.dock-a {
    margin-top: 7px;
    font-size: 17px;
    color: #444;
    display: flex;
}

.dock-a b {
    width: 1px;
    margin: 2px 0 3px 1px;
    background: #111;
}

.dock-p {
    margin-top: 8px;
    font-size: 18px;
    font-weight: bold;
    color: #444;
}

/* panels */
.panels {
    width: 247px;
    flex: none;
    display: flex;
    flex-direction: column;
}

.panel {
    background: #d5d5d5;
    border-right: 1px solid #444;
}

.tabs {
    height: 17px;
    display: flex;
    background: linear-gradient(#9b9b9b, #7c7c7c);
    position: relative;
}

.tab {
    width: 36px;
    border-right: 1px solid #666;
    color: #444;
    font-size: 11px;
    line-height: 18px;
    text-align: center;
}

.tab.on {
    background: #d5d5d5;
    color: #555;
}

.menu-ic {
    margin-left: auto;
    padding-right: 3px;
    font-size: 10px;
    line-height: 17px;
    color: #222;
}

.field {
    background: #fff;
    border-radius: 2px;
    font-size: 11px;
    color: #111;
}

/* color panel */
.color-panel {
    height: 132px;
    box-sizing: content-box;
    border-bottom: 3px solid #3c3c3c;
}

.color-body {
    height: 89px;
    display: flex;
    padding: 8px 0 0 8px;
}

.color-swatches {
    width: 36px;
    height: 36px;
    margin-top: 4px;
    position: relative;
    flex: none;
}

.c-fg,
.c-bg {
    position: absolute;
    width: 19px;
    height: 19px;
    background: #000;
    outline: 1px solid #333;
    border: 1px solid #ccc;
}

.c-fg {
    left: 0;
    top: 0;
    z-index: 1;
}

.c-bg {
    left: 13px;
    top: 13px;
}

.color-rows {
    display: flex;
    flex-direction: column;
    gap: 4px;
}

.c-row {
    height: 22px;
    display: flex;
    align-items: center;
}

.c-label {
    width: 14px;
    margin-top: 2px;
    font-size: 10px;
}

.c-track {
    width: 97px;
    height: 5px;
    position: relative;
    margin-right: 5px;
    outline: 1px solid #999;
}

.c-track.red {
    background: linear-gradient(to right, #000, #f00);
}

.c-track.green {
    background: linear-gradient(to right, #000, #0f0);
}

.c-track.blue {
    background: linear-gradient(to right, #000, #00f);
}

.tri {
    position: absolute;
    left: -3px;
    top: 6px;
    width: 10px;
    height: 8px;
    background: linear-gradient(#d8efd8 45%, #3a3 45%);
    clip-path: polygon(50% 0, 100% 100%, 0 100%);
}

.c-field {
    width: 36px;
    height: 22px;
    padding-left: 4px;
    line-height: 20px;
}

.spectrum {
    width: 199px;
    height: 15px;
    margin: 2px 0 0 8px;
    position: relative;
    background: linear-gradient(to bottom, #fff, transparent 45%, transparent 55%, #000),
        linear-gradient(to right, #e00, #ff0 18%, #0a0 38%, #0cf 55%, #00a 68%, #c0c 82%, #e00);
}

.spec-end {
    position: absolute;
    right: 0;
    top: 0;
    width: 9px;
    height: 15px;
    background: linear-gradient(#fff 50%, #000 50%);
}

/* mask panel */
.mask-panel {
    height: 249px;
    box-sizing: content-box;
    border-bottom: 3px solid #3c3c3c;
}

.mask-body {
    padding: 7px 37px 0 4px;
}

.mask-head {
    height: 32px;
    display: flex;
    align-items: flex-start;
    border-bottom: 1px solid #999;
}

.mask-thumb {
    width: 32px;
    height: 24px;
    border: 1px solid #111;
    background: #888;
    padding: 2px 4px;
}

.mask-thumb i {
    height: 18px;
    background: #fff;
    border-radius: 4px;
}

.mask-name {
    margin-left: 3px;
    line-height: 26px;
}

.mask-add {
    width: 14px;
    height: 14px;
    margin: 5px 8px 0 0;
    border: 1px solid #666;
    background: #bbb;
}

.mask-vec {
    width: 22px;
    height: 22px;
    margin-top: 1px;
    border: 2px solid #000;
    display: flex;
    align-items: center;
    justify-content: center;
}

.mask-row {
    height: 20px;
    display: flex;
    align-items: center;
    justify-content: space-between;
}

.mask-row.first {
    margin-top: 6px;
}

.m-field {
    width: 55px;
    height: 20px;
    padding-left: 3px;
    line-height: 18px;
}

.m-slider {
    height: 20px;
    margin: 0 6px 0 6px;
    position: relative;
}

.m-slider::before {
    content: "";
    position: absolute;
    left: 0;
    right: 0;
    top: 8px;
    height: 3px;
    background: #eee;
    border-top: 1px solid #aaa;
}

.knob {
    position: absolute;
    left: -4px;
    top: 4px;
    width: 9px;
    height: 12px;
    border: 1px solid #888;
    border-radius: 3px;
    background: #eee;
}

.knob.end {
    left: auto;
    right: -4px;
}

.btn-row {
    height: 18px;
    margin-top: 4px;
    justify-content: flex-end;
}

.btn-row.gap {
    margin-top: 10px;
}

.off {
    margin-right: auto;
    color: #aaa;
}

.m-btn {
    width: 79px;
    height: 18px;
    border: 1px solid #aaa;
    border-radius: 2px;
    background: #e2e2e2;
    color: #888;
    line-height: 16px;
    text-align: center;
}

.mask-foot {
    height: 18px;
    margin-top: 9px;
    padding: 0 8px 0 6px;
    border-top: 1px solid #999;
    display: flex;
    align-items: center;
    gap: 10px;
}

/* layers panel */
.layer-panel {
    flex: 1;
    display: flex;
    flex-direction: column;
}

.blend-row,
.lock-row {
    display: flex;
    align-items: center;
    padding: 0 4px 0 4px;
    white-space: nowrap;
}

.blend-row {
    height: 26px;
    padding-top: 4px;
    align-items: flex-start;
    line-height: 18px;
}

.blend-select {
    width: 122px;
    height: 22px;
    padding: 0 4px 0 6px;
    background: #fff;
    border-radius: 2px;
    display: flex;
    align-items: center;
    justify-content: space-between;
}

.blend-label {
    margin-left: 4px;
    width: 51px;
    flex: none;
}

.pct {
    width: 37px;
    height: 18px;
    margin-left: 4px;
    padding-left: 3px;
    line-height: 17px;
    flex: none;
}

.step {
    width: 17px;
    height: 18px;
    margin-left: 3px;
    flex: none;
    background: #e4e4e4;
    border: 1px solid #aaa;
    position: relative;
}

.step::after {
    content: "";
    position: absolute;
    left: 6px;
    top: 5px;
    border: 3px solid transparent;
    border-left: 4px solid #457;
    border-right: 0;
}

.lock-row {
    height: 27px;
    border-bottom: 1px solid #999;
    gap: 6px;
    padding-left: 7px;
    padding-top: 2px;
}

.lock-row .pct {
    margin-left: -2px;
}

.lock-row .step {
    margin-left: -3px;
}

.lock-ic.checker {
    width: 12px;
    height: 12px;
    border: 1px solid #aaa;
    background: repeating-conic-gradient(#bbb 0 25%, #eee 0 50%) 0 0 / 6px 6px;
}

.fill-label {
    width: 28px;
}

.layer-list {
    flex: 1;
    display: flex;
    border-bottom: 1px solid #888;
}

.layers {
    width: 230px;
    flex: none;
}

.layer {
    display: flex;
    align-items: center;
    border-bottom: 1px solid #aaa;
}

.layer.selected {
    height: 40px;
    background: #3a97fb;
    color: #fff;
}

.layer.bg-layer {
    height: 31px;
}

.eye {
    width: 25px;
    height: 100%;
    padding-left: 2px;
    flex: none;
    background: #d5d5d5;
    border-right: 1px solid #aaa;
    display: flex;
    align-items: center;
    justify-content: center;
}

.eye svg {
    outline: 1px solid #aaa;
    outline-offset: 1px;
}

.thumb {
    width: 32px;
    height: 24px;
    margin-left: 3px;
    flex: none;
    border: 1px solid #222;
    position: relative;
}

.thumb.white {
    background: #fff;
}

.shape-thumb {
    height: 32px;
    background: linear-gradient(#000 70%, #e8e8e8 70%);
}

.shape-thumb i {
    position: absolute;
    left: 9px;
    right: 9px;
    bottom: 3px;
    height: 3px;
    border-top: 1px solid #222;
    border-bottom: 1px solid #222;
}

.chain {
    margin: 0 3px;
    flex: none;
}

.mask-mini {
    width: 35px;
    height: 28px;
    margin-left: 0;
    background: #777;
    outline: 2px solid #fff;
    outline-offset: -2px;
    padding: 4px 8px;
}

.mask-mini i {
    height: 18px;
    background: #fff;
    border-radius: 4px;
}

.layer-name {
    margin-left: 6px;
    font-size: 11px;
}

.layer-name.it {
    margin-left: 9px;
    font-style: italic;
}

.bg-lock {
    margin-right: 15px;
}

.layer-scroll {
    flex: 1;
    background: #ececec;
    display: flex;
    flex-direction: column;
    align-items: center;
    padding: 6px 0;
}

.layer-foot {
    height: 19px;
    flex: none;
    padding-right: 22px;
    display: flex;
    align-items: center;
    justify-content: flex-end;
    gap: 14px;
    border-bottom: 1px solid #444;
}

.fx {
    font-family: "Liberation Serif", serif;
    font-size: 14px;
    font-style: italic;
    font-weight: bold;
}

.foot-mask {
    width: 13px;
    height: 12px;
    border: 1px solid #333;
    background: radial-gradient(circle, #fff 3px, #888 4px);
}

/* overlays */
.arrow {
    position: absolute;
    left: 0;
    top: 0;
    pointer-events: none;
}

.watermark {
    position: absolute;
    left: 984px;
    top: 846px;
    width: 230px;
    height: 112px;
    opacity: 0.62;
    color: #fff;
}

.wm-bai {
    position: absolute;
    left: -3px;
    top: 23px;
    font-size: 50px;
    font-weight: bold;
    line-height: 60px;
    letter-spacing: -1px;
}

.wm-paw {
    position: absolute;
    left: 75px;
    top: 0;
}

.wm-du {
    position: absolute;
    left: 92px;
    top: 41px;
    font-size: 28px;
    font-weight: bold;
    color: #aaa;
    line-height: 30px;
}

.wm-jy {
    position: absolute;
    left: 146px;
    top: 28px;
    font-family: "Noto Sans CJK SC", sans-serif;
    font-size: 38px;
    line-height: 46px;
    white-space: nowrap;
}

.wm-url {
    position: absolute;
    left: -3px;
    top: 76px;
    font-size: 28px;
    line-height: 34px;
    letter-spacing: 0.25px;
    white-space: nowrap;
}
```
